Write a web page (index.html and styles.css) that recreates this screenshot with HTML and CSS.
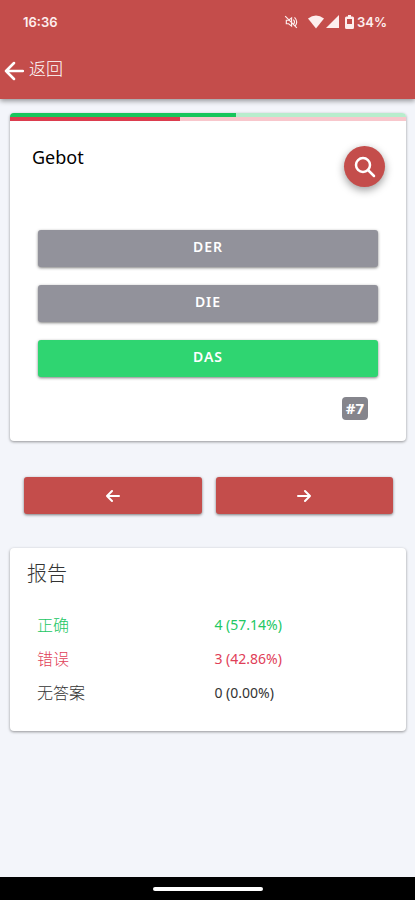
FILE: index.html
```html
<!DOCTYPE html>
<html lang="zh-CN">
<head>
<meta charset="utf-8">
<meta name="viewport" content="width=device-width, initial-scale=1">
<title>Gebot</title>
<link rel="stylesheet" href="styles.css">
</head>
<body>
<header class="header">
  <div class="status">
    <span>16:36</span>
    <div class="status-icons">
      <svg class="mute" width="14" height="14" viewBox="0 0 24 24" fill="none" stroke="currentColor" stroke-width="2"><path d="M4 9v6h4l5 4V5L8 9z"/><path d="M16 8q4 4 0 8M18 4q7 7 1 15M2 2l20 20"/></svg>
      <svg width="16" height="14" viewBox="0 0 16 14" fill="currentColor"><path d="M0 3.500Q8-2.500 16 3.500L8 13.500z"/></svg>
      <svg width="13" height="13" viewBox="0 0 13 13" fill="currentColor"><path d="M13 0v13H0z"/></svg>
      <svg class="battery" width="9" height="14" viewBox="0 0 9 14" fill="currentColor" fill-rule="evenodd"><path d="M3 0h3v1.500h1.500Q9 1.500 9 3v9.500Q9 14 7.500 14h-6Q0 14 0 12.500V3q0-1.500 1.500-1.500H3zM2 4v5h5V4z"/></svg>
      <span>34%</span>
    </div>
  </div>
  <a class="back" href="#">
    <svg width="20" height="20" viewBox="0 0 20 20" fill="none" stroke="currentColor" stroke-width="2.500" stroke-linecap="round" stroke-linejoin="round"><path d="M10 2L2 10l8 8M2 10h17"/></svg>
    <span>返回</span>
  </a>
</header>
<main class="content">
  <section class="card">
    <div class="bar bar-right"><div class="fill" style="width:57.14%"></div></div>
    <div class="bar bar-wrong"><div class="fill" style="width:42.86%"></div></div>
    <div class="question">
      <h1 class="word">Gebot</h1>
      <button class="search" type="button" aria-label="搜索">
        <svg width="22" height="22" viewBox="0 0 22 22" fill="none" stroke="currentColor" stroke-width="2.500" stroke-linecap="round"><circle cx="9" cy="9" r="7"/><path d="M14 14l6 6"/></svg>
      </button>
    </div>
    <div class="answers">
      <button class="button" type="button">DER</button>
      <button class="button" type="button">DIE</button>
      <button class="button correct" type="button">DAS</button>
    </div>
    <div class="count"><span class="badge">#7</span></div>
  </section>
  <nav class="pager">
    <button class="button primary" type="button" aria-label="上一个"><svg width="14" height="14" viewBox="0 0 14 14" fill="none" stroke="currentColor" stroke-width="2" stroke-linecap="round" stroke-linejoin="round"><path d="M6 2L1 7l5 5M1 7h12"/></svg></button>
    <button class="button primary" type="button" aria-label="下一个"><svg width="14" height="14" viewBox="0 0 14 14" fill="none" stroke="currentColor" stroke-width="2" stroke-linecap="round" stroke-linejoin="round"><path d="M8 2l5 5-5 5M13 7H1"/></svg></button>
  </nav>
  <section class="card report">
    <h2 class="title">报告</h2>
    <table class="results">
      <tr class="good"><th scope="row">正确</th><td>4 (57.14%)</td></tr>
      <tr class="bad"><th scope="row">错误</th><td>3 (42.86%)</td></tr>
      <tr><th scope="row">无答案</th><td>0 (0.00%)</td></tr>
    </table>
  </section>
</main>
<footer class="system"><div class="handle"></div></footer>
</body>
</html>
```
FILE: styles.css
```css
* { box-sizing: border-box; }
body {
  margin: 0;
  min-height: 100vh;
  display: flex;
  flex-direction: column;
  background: #f3f5fa;
  color: #333;
  font-family: "Noto Sans", "Noto Sans CJK SC", sans-serif;
}
.header {
  background: #c44d4b;
  color: #fff;
  height: 99px;
  box-shadow: 0 2px 5px rgba(0, 0, 0, 0.4);
}
.status {
  display: flex;
  justify-content: space-between;
  align-items: center;
  height: 43px;
  padding: 0 28px 0 23px;
  font: 600 13px/16px Inter, sans-serif;
  color: #fdeeee;
}
.status-icons { display: flex; align-items: center; gap: 2px; }
.mute { margin-right: 8px; }
.battery { margin: 0 1px 0 4px; }
.back {
  display: inline-flex;
  align-items: center;
  gap: 5px;
  height: 52px;
  padding-left: 4px;
  color: inherit;
  font-size: 17px;
  font-weight: 300;
  line-height: 24px;
  text-decoration: none;
}
.back svg { margin-top: 4px; }
.content { flex: 1; padding: 14px 9px 24px 10px; }
.card {
  background: #fff;
  border-radius: 4px;
  overflow: hidden;
  box-shadow: 0 1px 3px rgba(0, 0, 0, 0.4);
}
.bar { height: 4px; }
.fill { height: 100%; }
.bar-right { background: #b8edcd; }
.bar-right .fill { background: #18c65c; }
.bar-wrong { background: #f8c7cc; }
.bar-wrong .fill { background: #dc3d4e; }
.question {
  display: flex;
  justify-content: space-between;
  align-items: flex-start;
  padding: 25px 21px 43px 22px;
}
.word {
  margin: 0;
  font-size: 18px;
  line-height: 22px;
  font-weight: 400;
  color: #000;
}
.search {
  display: flex;
  align-items: center;
  justify-content: center;
  width: 41px;
  height: 41px;
  padding: 0;
  border: 0;
  border-radius: 50%;
  background: #c44d4b;
  color: #fff;
  box-shadow: 0 3px 9px rgba(0, 0, 0, 0.4);
}
.answers { display: grid; gap: 18px; padding: 0 28px; }
.button {
  display: flex;
  align-items: center;
  justify-content: center;
  width: 100%;
  height: 37px;
  padding: 0 0 3px;
  border: 0;
  border-radius: 3px;
  background: #92929b;
  color: #fff;
  font: 600 14px/20px "Noto Sans", sans-serif;
  letter-spacing: 1px;
  box-shadow: 0 1px 3px rgba(0, 0, 0, 0.5);
}
.correct { background: #2fd571; }
.primary { background: #c44d4b; padding: 0; }
.count { display: flex; justify-content: flex-end; padding: 20px 38px 21px; }
.badge {
  padding: 0 4px;
  border-radius: 4px;
  background: #85858c;
  color: #fff;
  font-size: 15px;
  line-height: 23px;
  font-weight: 700;
}
.pager {
  display: grid;
  grid-template-columns: 1fr 1fr;
  gap: 14px;
  padding: 36px 13px 34px 14px;
}
.report { padding: 14px 17px 21px; }
.title {
  margin: 0 0 22px;
  font-size: 20px;
  line-height: 24px;
  font-weight: 300;
}
.results {
  width: 100%;
  table-layout: fixed;
  border-collapse: collapse;
  font-size: 14px;
  line-height: 20px;
}
.results th, .results td {
  height: 34px;
  padding: 0 10px;
  text-align: left;
  font-weight: 400;
}
.results th { width: 49%; font-size: 16px; font-weight: 300; }
.good { color: #22c763; }
.bad { color: #df4058; }
.system {
  height: 23px;
  background: #000;
  display: flex;
  align-items: center;
  justify-content: center;
}
.handle { width: 110px; height: 4px; border-radius: 2px; background: #fff; }
```
